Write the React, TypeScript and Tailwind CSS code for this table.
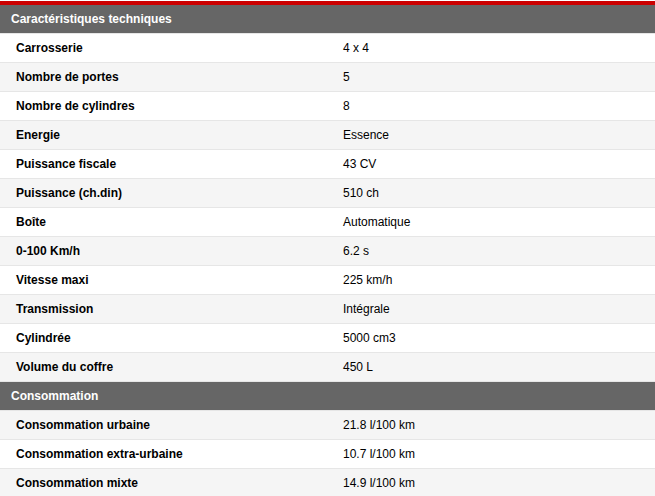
const specs: [string, string][] = [
  ['Carrosserie', '4 x 4'],
  ['Nombre de portes', '5'],
  ['Nombre de cylindres', '8'],
  ['Energie', 'Essence'],
  ['Puissance fiscale', '43 CV'],
  ['Puissance (ch.din)', '510 ch'],
  ['Boîte', 'Automatique'],
  ['0-100 Km/h', '6.2 s'],
  ['Vitesse maxi', '225 km/h'],
  ['Transmission', 'Intégrale'],
  ['Cylindrée', '5000 cm3'],
  ['Volume du coffre', '450 L'],
];

const conso: [string, string][] = [
  ['Consommation urbaine', '21.8 l/100 km'],
  ['Consommation extra-urbaine', '10.7 l/100 km'],
  ['Consommation mixte', '14.9 l/100 km'],
];

const SectionHeader = ({ title }: { title: string }) => (
  <div className="h-[29px] bg-[#666666] border-b border-[#e6e6e6] flex items-center pl-[11px] text-[12px] font-bold text-white">
    {title}
  </div>
);

const Row = ({ label, value, shaded }: { label: string; value: string; shaded: boolean }) => (
  <div className={`h-[29px] flex items-center border-b border-[#e6e6e6] text-[12px] text-black ${shaded ? 'bg-[#f5f5f5]' : 'bg-white'}`}>
    <div className="w-[343px] pl-[16px] font-bold">{label}</div>
    <div>{value}</div>
  </div>
);

export default function App() {
  return (
    <div className="w-[655px] h-[496px] overflow-hidden bg-white pt-px" style={{ fontFamily: '"Liberation Sans", Arial, sans-serif' }}>
      <div className="border-t-4 border-[#cc0000]">
        <SectionHeader title="Caractéristiques techniques" />
        {specs.map(([label, value], i) => (
          <Row key={label} label={label} value={value} shaded={i % 2 === 1} />
        ))}
        <SectionHeader title="Consommation" />
        {conso.map(([label, value], i) => (
          <Row key={label} label={label} value={value} shaded={i % 2 === 0} />
        ))}
      </div>
    </div>
  );
}
